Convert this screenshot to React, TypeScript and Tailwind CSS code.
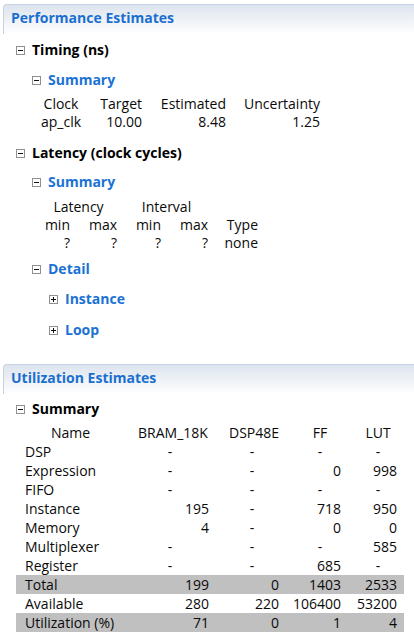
import React from "react";

function Box({ plus = false }: { plus?: boolean }) {
  return (
    <svg width="9" height="9" viewBox="0 0 9 9" className="shrink-0">
      <rect x="0.5" y="0.5" width="8" height="8" fill="#fff" stroke="#8f8f8f" />
      <line x1="2" y1="4.5" x2="7" y2="4.5" stroke="#111" />
      {plus && <line x1="4.5" y1="2" x2="4.5" y2="7" stroke="#111" />}
    </svg>
  );
}

function Header({ title }: { title: string }) {
  return (
    <div className="ml-[3px] h-[30px] border-t border-l border-[#c5d2e3] rounded-tl-[4px] bg-gradient-to-b from-[#dde4ee] to-white pl-[7px]">
      <div className="pt-[3px] h-[22px] flex items-center text-[14px] font-bold text-[#1a6fcf]">{title}</div>
    </div>
  );
}

function Line({
  indent,
  text,
  blue = false,
  plus = false,
  className = "",
}: {
  indent: string;
  text: string;
  blue?: boolean;
  plus?: boolean;
  className?: string;
}) {
  return (
    <div className={`h-[20px] flex items-center gap-[7px] ${indent} ${className}`}>
      <Box plus={plus} />
      <span className={`text-[14px] font-bold ${blue ? "text-[#1a72d4]" : "text-black"}`}>{text}</span>
    </div>
  );
}

type Cell = string;
const utilRows: { name: string; vals: Cell[]; gray?: boolean }[] = [
  { name: "DSP", vals: ["-", "-", "-", "-"] },
  { name: "Expression", vals: ["-", "-", "0", "998"] },
  { name: "FIFO", vals: ["-", "-", "-", "-"] },
  { name: "Instance", vals: ["195", "-", "718", "950"] },
  { name: "Memory", vals: ["4", "-", "0", "0"] },
  { name: "Multiplexer", vals: ["-", "-", "-", "585"] },
  { name: "Register", vals: ["-", "-", "685", "-"] },
  { name: "Total", vals: ["199", "0", "1403", "2533"], gray: true },
  { name: "Available", vals: ["280", "220", "106400", "53200"] },
  { name: "Utilization (%)", vals: ["71", "0", "1", "4"], gray: true },
];

const headPad = ["pl-[12px] pr-[4px]", "pl-[16px] pr-[4px]", "pl-[16px] pr-[4px]", "pl-[14px] pr-[7px]"];
const numPad = ["pr-[4px]", "pr-[4px]", "pr-[4px]", "pr-[7px]"];
const dashPad = ["pl-[6px] pr-[4px]", "pl-[12px] pr-[4px]", "pl-[16px] pr-[4px]", "pl-[14px] pr-[7px]"];

export default function App() {
  return (
    <div className="w-[414px] h-[638px] overflow-hidden bg-white pt-[4px] font-['Segoe_UI','Open_Sans',sans-serif] text-[14px] text-[#0a0a0a] leading-none">
      <Header title="Performance Estimates" />
      <Line indent="ml-[16px]" text="Timing (ns)" className="mt-[6px]" />
      <Line indent="ml-[32px]" text="Summary" blue className="mt-[10px]" />
      <div className="mt-[5px] ml-[36px] grid grid-cols-[50px_60px_84px_94px] auto-rows-[18px] items-center">
        <div className="text-center">Clock</div>
        <div className="text-right pr-[4px]">Target</div>
        <div className="text-right pr-[4px]">Estimated</div>
        <div className="text-right pr-[4px]">Uncertainty</div>
        <div className="text-center">ap_clk</div>
        <div className="text-right pr-[4px]">10.00</div>
        <div className="text-right pr-[4px]">8.48</div>
        <div className="text-right pr-[4px]">1.25</div>
      </div>
      <Line indent="ml-[16px]" text="Latency (clock cycles)" className="mt-[12px]" />
      <Line indent="ml-[32px]" text="Summary" blue className="mt-[9px]" />
      <div className="mt-[6px] ml-[36px] grid grid-cols-[38px_47px_44px_47px_50px] auto-rows-[18px] items-center">
        <div className="col-span-2 text-center">Latency</div>
        <div className="col-span-2 text-center">Interval</div>
        <div></div>
        <div className="text-right pr-[4px]">min</div>
        <div className="text-right pr-[4px]">max</div>
        <div className="text-right pr-[4px]">min</div>
        <div className="text-right pr-[4px]">max</div>
        <div className="text-right pr-[4px]">Type</div>
        <div className="text-right pr-[4px]">?</div>
        <div className="text-right pr-[4px]">?</div>
        <div className="text-right pr-[4px]">?</div>
        <div className="text-right pr-[4px]">?</div>
        <div className="text-right pr-[4px]">none</div>
      </div>
      <Line indent="ml-[32px]" text="Detail" blue className="mt-[7px]" />
      <Line indent="ml-[49px]" text="Instance" blue plus className="mt-[10px]" />
      <Line indent="ml-[49px]" text="Loop" blue plus className="mt-[11px]" />

      <div className="mt-[24px]">
        <Header title="Utilization Estimates" />
      </div>
      <Line indent="ml-[16px]" text="Summary" className="mt-[5px]" />
      <div className="mt-[4px] ml-[16px] w-[388px]">
        <div className="grid grid-cols-[109px_88px_70px_62px_59px] h-[19px] items-center">
          <div className="text-center">Name</div>
          {["BRAM_18K", "DSP48E", "FF", "LUT"].map((h, i) => (
            <div key={h} className={`text-center ${headPad[i]}`}>{h}</div>
          ))}
        </div>
        {utilRows.map((r) => (
          <div
            key={r.name}
            className={`grid grid-cols-[109px_88px_70px_62px_59px] h-[19px] items-center ${r.gray ? "bg-[#c0c0c0]" : ""}`}
          >
            <div className="pl-[9px] whitespace-nowrap">{r.name}</div>
            {r.vals.map((v, i) =>
              v === "-" ? (
                <div key={i} className={`text-center ${dashPad[i]}`}>-</div>
              ) : (
                <div key={i} className={`text-right ${numPad[i]}`}>{v}</div>
              )
            )}
          </div>
        ))}
      </div>
    </div>
  );
}
